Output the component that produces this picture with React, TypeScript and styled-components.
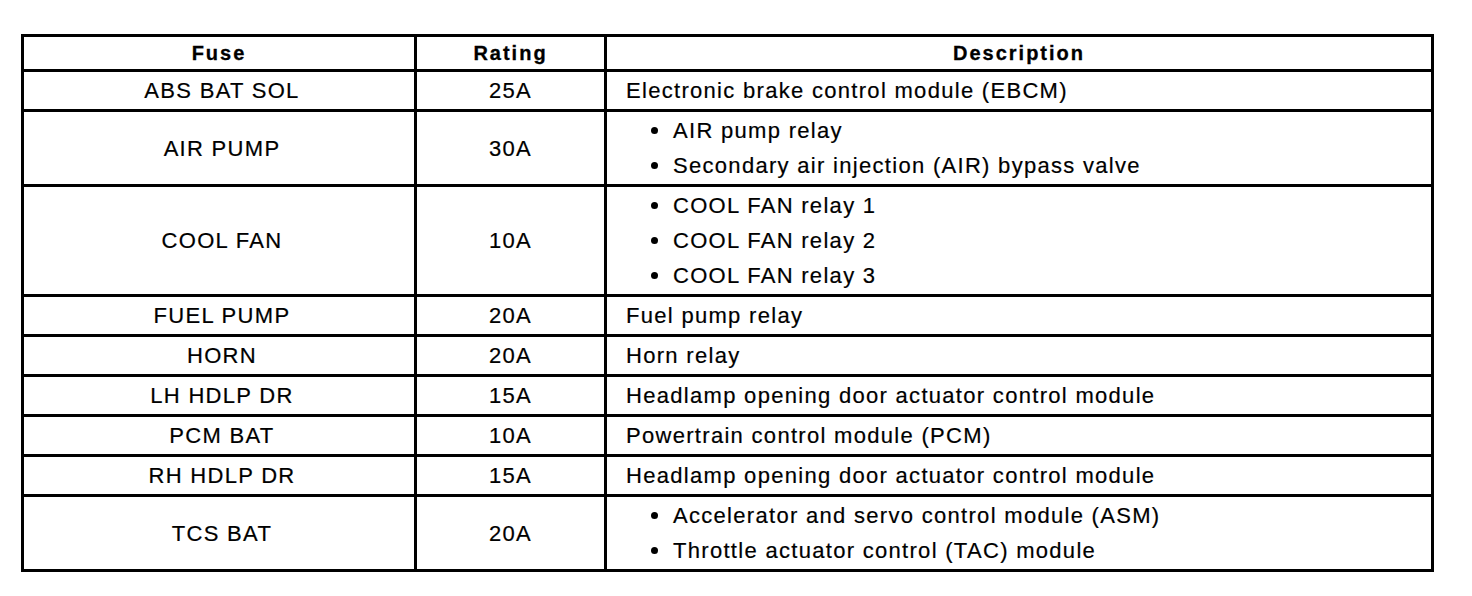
import styled, { createGlobalStyle } from 'styled-components';

type FuseRow = {
  fuse: string;
  rating: string;
  description: string | string[];
};

const rows: FuseRow[] = [
  { fuse: 'ABS BAT SOL', rating: '25A', description: 'Electronic brake control module (EBCM)' },
  { fuse: 'AIR PUMP', rating: '30A', description: ['AIR pump relay', 'Secondary air injection (AIR) bypass valve'] },
  { fuse: 'COOL FAN', rating: '10A', description: ['COOL FAN relay 1', 'COOL FAN relay 2', 'COOL FAN relay 3'] },
  { fuse: 'FUEL PUMP', rating: '20A', description: 'Fuel pump relay' },
  { fuse: 'HORN', rating: '20A', description: 'Horn relay' },
  { fuse: 'LH HDLP DR', rating: '15A', description: 'Headlamp opening door actuator control module' },
  { fuse: 'PCM BAT', rating: '10A', description: 'Powertrain control module (PCM)' },
  { fuse: 'RH HDLP DR', rating: '15A', description: 'Headlamp opening door actuator control module' },
  { fuse: 'TCS BAT', rating: '20A', description: ['Accelerator and servo control module (ASM)', 'Throttle actuator control (TAC) module'] },
];

function App() {
  return (
    <>
      <GlobalStyle />
      <Page>
        <FuseTable>
          <HeadCell>Fuse</HeadCell>
          <HeadCell>Rating</HeadCell>
          <HeadCell>Description</HeadCell>
          {rows.map((row) => (
            <Row key={row.fuse + row.description}>
              <CenterCell $shift={6}>{row.fuse}</CenterCell>
              <CenterCell $shift={0}>{row.rating}</CenterCell>
              {Array.isArray(row.description) ? (
                <DescCell>
                  <BulletList>
                    {row.description.map((item) => (
                      <li key={item}>
                        <Dot />
                        {item}
                      </li>
                    ))}
                  </BulletList>
                </DescCell>
              ) : (
                <DescCell>{row.description}</DescCell>
              )}
            </Row>
          ))}
        </FuseTable>
      </Page>
    </>
  );
}

export default App;

const GlobalStyle = createGlobalStyle`
  body {
    margin: 0;
    background: #ffffff;
    color: #000000;
    font-family: "Liberation Sans", Arial, sans-serif;
  }
`;

const Page = styled.div`
  padding: 34px 0 0 21px;
`;

const FuseTable = styled.div`
  display: grid;
  grid-template-columns: 390px 187px 824px;
  gap: 3px;
  width: 1413px;
  padding: 3px;
  box-sizing: border-box;
  background: #000000;
`;

const Row = styled.div`
  display: contents;
`;

const HeadCell = styled.div`
  background: #ffffff;
  height: 32px;
  display: flex;
  align-items: center;
  justify-content: center;
  font-size: 20px;
  font-weight: bold;
  letter-spacing: 2px;
  -webkit-text-stroke: 0.3px #000000;
`;

const BaseCell = styled.div`
  background: #ffffff;
  display: flex;
  align-items: center;
  font-size: 22px;
  letter-spacing: 1.3px;
  line-height: 35px;
  padding: 1px 0 1px;
  -webkit-text-stroke: 0.2px #000000;
`;

const CenterCell = styled(BaseCell)<{ $shift: number }>`
  justify-content: center;
  padding-left: ${(p) => p.$shift}px;
`;

const DescCell = styled(BaseCell)`
  padding-left: 19px;
`;

const BulletList = styled.ul`
  list-style: none;
  margin: 0;
  padding: 0 0 0 25px;

  li {
    display: flex;
    align-items: center;
  }
`;

const Dot = styled.span`
  display: inline-block;
  width: 7px;
  height: 7px;
  border-radius: 50%;
  background: #000000;
  margin: 0 15px 0 0;
`;
